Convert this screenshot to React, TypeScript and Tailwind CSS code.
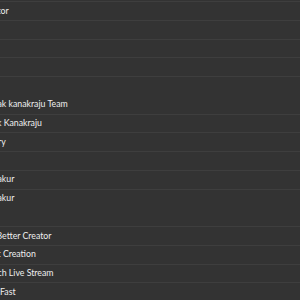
import React from "react";

// rows of the list, scrolled so the start of each label sits off the left edge
const rows = [
  { label: "tor", shift: "-ml-[2.5px]", line: true },
  { label: "", shift: "ml-0", line: true },
  { label: "", shift: "ml-0", line: true },
  { label: "", shift: "ml-0", line: true },
  { label: "", shift: "ml-0", line: true },
  { label: "ak kanakraju Team", shift: "-ml-[2.5px]", line: false },
  { label: "k Kanakraju", shift: "-ml-[3px]", line: true },
  { label: "ry", shift: "-ml-[2px]", line: true },
  { label: "", shift: "ml-0", line: true },
  { label: "akur", shift: "-ml-[2.5px]", line: true },
  { label: "akur", shift: "-ml-[2.5px]", line: true },
  { label: "", shift: "ml-0", line: false },
  { label: "Better Creator", shift: "-ml-[3.5px]", line: true },
  { label: "t Creation", shift: "-ml-[2.5px]", line: true },
  { label: "ch Live Stream", shift: "-ml-[2.5px]", line: true },
  { label: "Fast", shift: "ml-0", line: true },
];

export default function App() {
  return (
    <div className="w-[300px] h-[300px] overflow-hidden bg-[#333333] pt-[1px] font-['Lato',_sans-serif]">
      <ul className="flex flex-col">
        {rows.map((row, i) => (
          <li
            key={i}
            className={
              row.line
                ? "h-[18.75px] border-t border-[#3e3e3e] flex items-center overflow-hidden whitespace-nowrap"
                : "h-[18.75px] border-t border-transparent flex items-center overflow-hidden whitespace-nowrap"
            }
          >
            <span className={`${row.shift} text-[8.75px] leading-none text-[#eeeeee]`}>{row.label}</span>
          </li>
        ))}
      </ul>
    </div>
  );
}
